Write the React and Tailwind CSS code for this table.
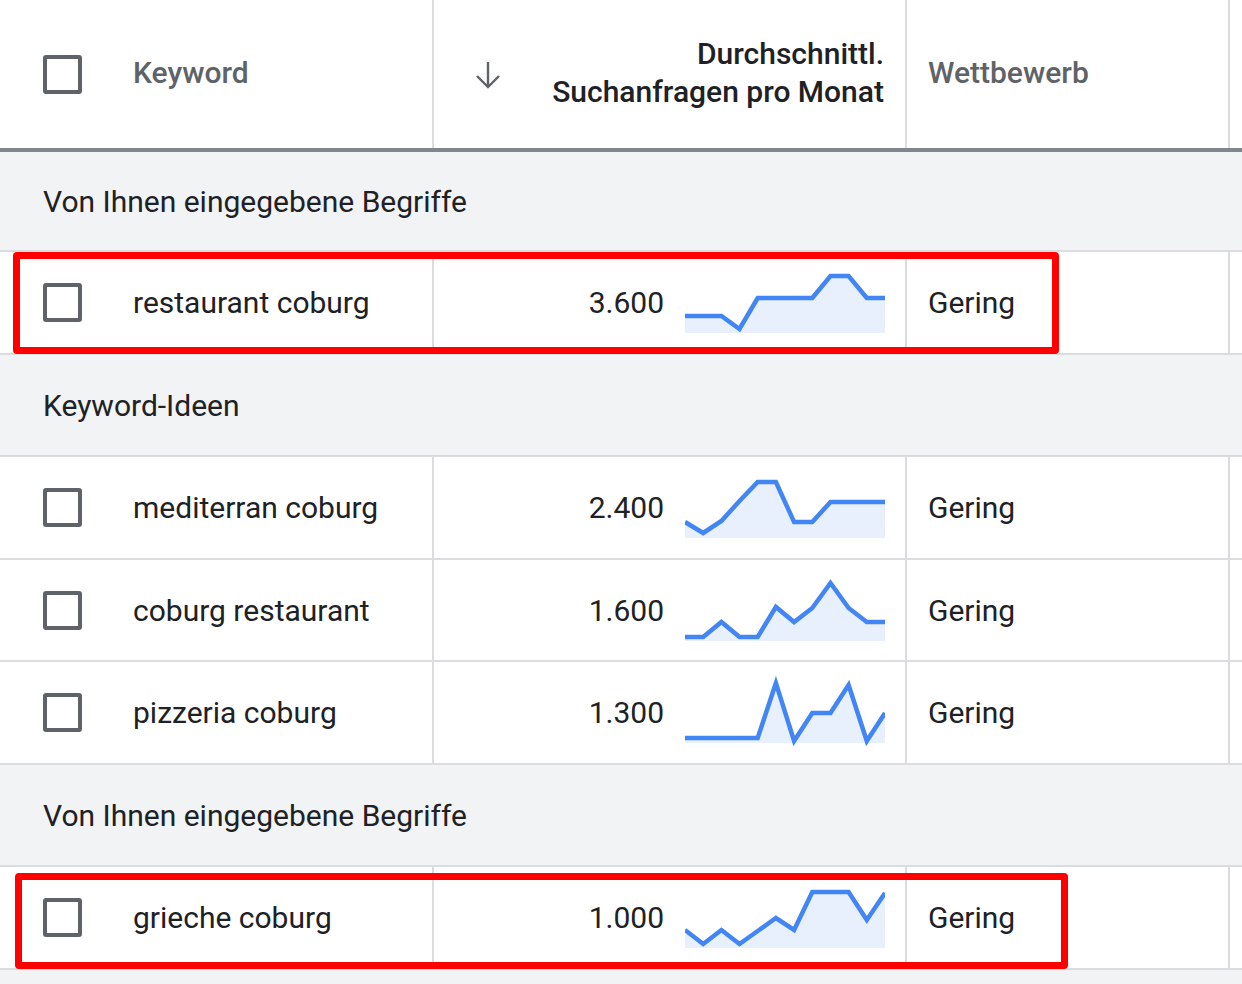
import React from "react";

const rows = [
    { type: "section", label: "Von Ihnen eingegebene Begriffe", h: "h-[100px]" },
    {
        type: "row",
        keyword: "restaurant coburg",
        volume: "3.600",
        spark: [64, 64, 64, 77, 46, 46, 46, 46, 24, 24, 46, 46],
        h: "h-[103px]",
    },
    { type: "section", label: "Keyword-Ideen", h: "h-[102px]" },
    {
        type: "row",
        keyword: "mediterran coburg",
        volume: "2.400",
        spark: [65, 76, 64, 44, 25, 25, 65, 65, 45, 45, 45, 45],
        h: "h-[103px]",
    },
    {
        type: "row",
        keyword: "coburg restaurant",
        volume: "1.600",
        spark: [77, 77, 62, 77, 77, 47, 62, 48, 23, 48, 62, 62],
        h: "h-[102px]",
    },
    {
        type: "row",
        keyword: "pizzeria coburg",
        volume: "1.300",
        spark: [76, 76, 76, 76, 76, 21, 79, 51, 51, 23, 79, 51],
        h: "h-[103px]",
    },
    { type: "section", label: "Von Ihnen eingegebene Begriffe", h: "h-[102px]" },
    {
        type: "row",
        keyword: "grieche coburg",
        volume: "1.000",
        spark: [63, 77, 63, 77, 64, 51, 63, 25, 25, 25, 53, 26],
        h: "h-[103px]",
    },
];

function Checkbox() {
    return (
        <div className="w-[39px] h-[39px] shrink-0 rounded-[3px] border-4 border-[#5f6368] bg-white" />
    );
}

function Sparkline({ values }) {
    const pts = values.map((y, i) => [(i * 200) / 11, y]);
    const line = pts.map(([x, y]) => `${x.toFixed(1)},${y}`).join(" ");
    const area = `0,81 ${line} 200,81`;
    return (
        <svg width="200" height="100" viewBox="0 0 200 100" className="shrink-0">
            <polygon points={area} fill="#e8f0fe" />
            <polyline
                points={line}
                fill="none"
                stroke="#4285f4"
                strokeWidth="4.5"
                strokeLinejoin="miter"
            />
        </svg>
    );
}

export default function App() {
    return (
        <div
            className="relative w-[1242px] h-[984px] overflow-hidden bg-[#f1f3f4] text-[#202124]"
            style={{ fontFamily: "Roboto, 'Liberation Sans', sans-serif" }}
        >
            {/* Header */}
            <div className="flex h-[152px] bg-white border-b-4 border-[#80868b]">
                <div className="w-[434px] flex items-center pl-[43px] gap-[51px] border-r-2 border-[#dadce0]">
                    <Checkbox />
                    <span className="text-[30px] font-medium text-[#5f6368] -mt-[3px]">Keyword</span>
                </div>
                <div className="w-[473px] flex items-center justify-between pl-[41px] pr-[21px] border-r-2 border-[#dadce0]">
                    <svg width="26" height="28" viewBox="0 0 26 28" className="mt-[2px]">
                        <path
                            d="M13 1V26M2 15L13 26L24 15"
                            fill="none"
                            stroke="#5f6368"
                            strokeWidth="2.4"
                        />
                    </svg>
                    <div className="text-right text-[30px] leading-[38px] font-medium text-[#202124] -mt-[3px]">
                        <div>Durchschnittl.</div>
                        <div>Suchanfragen pro Monat</div>
                    </div>
                </div>
                <div className="w-[323px] flex items-center pl-[21px] border-r-2 border-[#dadce0]">
                    <span className="text-[30px] font-medium text-[#5f6368] -mt-[3px]">Wettbewerb</span>
                </div>
                <div className="flex-1" />
            </div>

            {rows.map((r, i) =>
                r.type === "section" ? (
                    <div
                        key={i}
                        className={`${r.h} flex items-center pl-[43px] bg-[#f1f3f4] border-b-2 border-[#dadce0]`}
                    >
                        <span className="text-[30px] text-[#202124]">{r.label}</span>
                    </div>
                ) : (
                    <div key={i} className={`${r.h} flex bg-white border-b-2 border-[#dadce0]`}>
                        <div className="w-[434px] flex items-center pl-[43px] gap-[51px] border-r-2 border-[#dadce0]">
                            <Checkbox />
                            <span className="text-[30px]">{r.keyword}</span>
                        </div>
                        <div className="w-[473px] flex items-start justify-end pr-[20px] border-r-2 border-[#dadce0]">
                            <span className="self-center text-[30px] mr-[21px]">{r.volume}</span>
                            <Sparkline values={r.spark} />
                        </div>
                        <div className="w-[323px] flex items-center pl-[21px] border-r-2 border-[#dadce0]">
                            <span className="text-[30px]">Gering</span>
                        </div>
                        <div className="flex-1" />
                    </div>
                )
            )}

            {/* red highlight annotations */}
            <div className="absolute left-[13px] top-[252px] w-[1046px] h-[102px] border-[7px] border-[#ff0000] rounded-[4px] pointer-events-none" />
            <div className="absolute left-[15px] top-[873px] w-[1053px] h-[96px] border-[7px] border-[#ff0000] rounded-[4px] pointer-events-none" />
        </div>
    );
}
